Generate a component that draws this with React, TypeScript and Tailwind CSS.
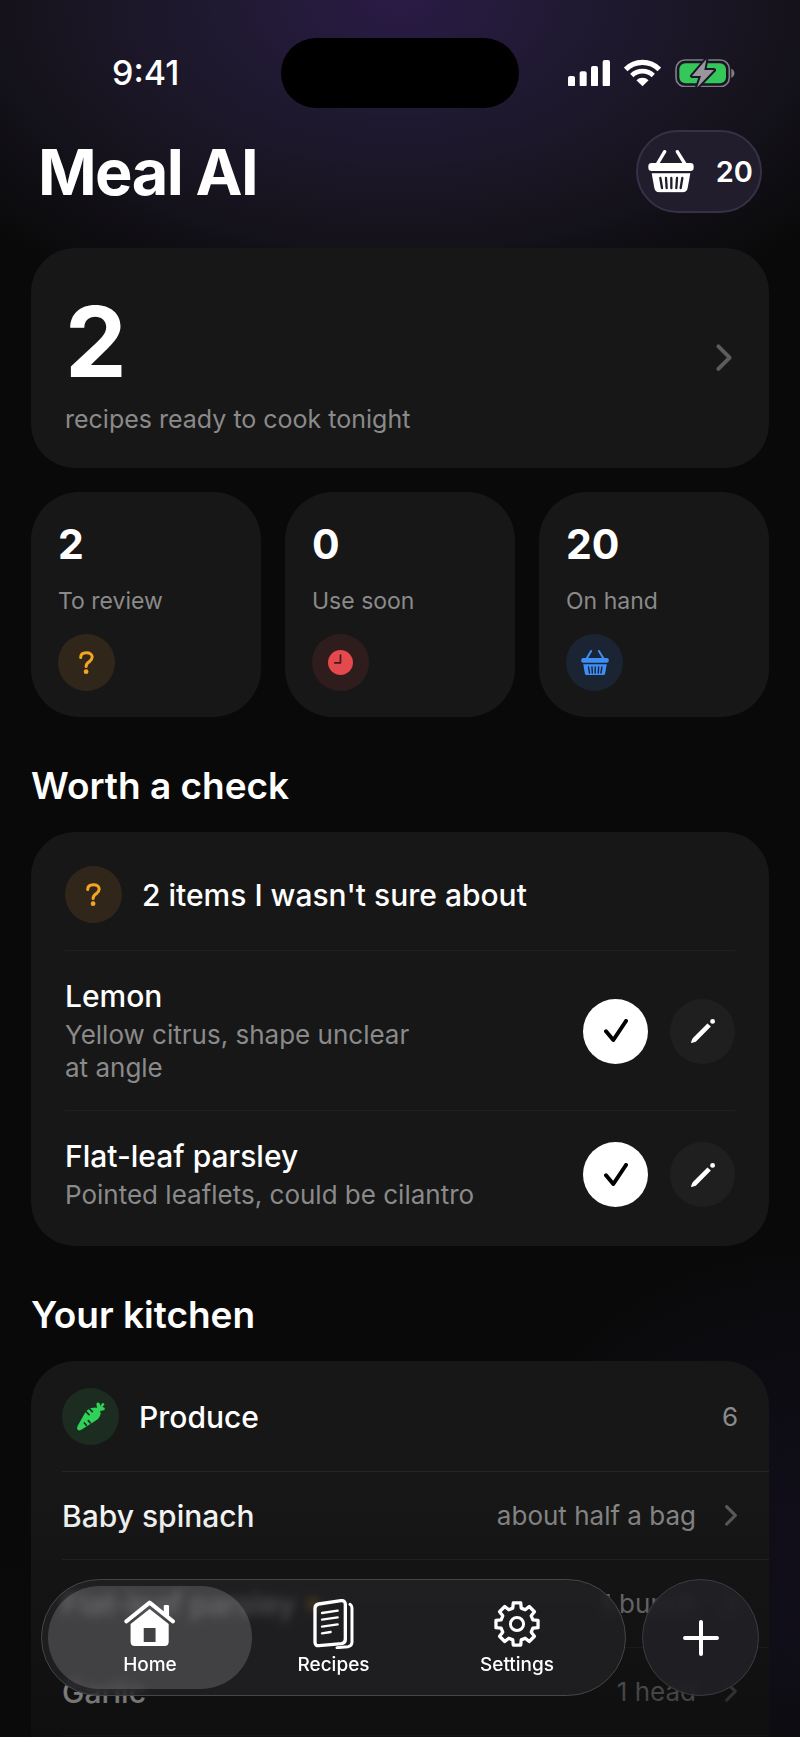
import { ReactNode } from 'react';
import clsx from 'clsx';

interface IconProps {
  className?: string;
}

function BasketIcon({ className }: IconProps) {
  return (
    <svg viewBox="0 0 138 128" className={className} aria-hidden="true">
      <mask id="basket-slots">
        <rect width="138" height="128" fill="white" />
        <path
          d="M37 84l5 30M54 84l2 30M70 84v30M87 84l-2 30M103 84l-5 30"
          stroke="black"
          strokeWidth="7"
          strokeLinecap="round"
        />
      </mask>
      <path d="M50 5L28 42M88 5l23 37" stroke="currentColor" strokeWidth="10" strokeLinecap="round" fill="none" />
      <rect x="1" y="39" width="136" height="24" rx="10" fill="currentColor" />
      <path
        d="M11 70H127L119 114Q116 127 104 127H34Q22 127 19 114Z"
        fill="currentColor"
        mask="url(#basket-slots)"
      />
    </svg>
  );
}

function QuestionIcon({ className }: IconProps) {
  return (
    <svg viewBox="0 0 44 68" className={className} fill="none" aria-hidden="true">
      <path
        d="M5 19C5 9 12 5 22 5S39 10 39 18C39 25 35 28 30 32C24 36 21 39 21 46"
        stroke="currentColor"
        strokeWidth="9"
        strokeLinecap="round"
      />
      <circle cx="21" cy="61" r="7" fill="currentColor" />
    </svg>
  );
}

function ClockIcon({ className }: IconProps) {
  return (
    <svg viewBox="0 0 74 74" className={className} fill="none" aria-hidden="true">
      <circle cx="37" cy="37" r="37" fill="currentColor" />
      <path d="M37 15V38H20" stroke="#3a1d1e" strokeWidth="5" strokeLinecap="round" strokeLinejoin="round" />
    </svg>
  );
}

function CarrotIcon({ className }: IconProps) {
  return (
    <svg viewBox="0 0 84 86" className={className} fill="none" aria-hidden="true">
      <path
        d="M1 82Q-1 77 3 70L25 31Q36 17 50 17Q60 16 66 23Q74 31 69 42Q65 52 53 58L13 83Q4 88 1 82Z"
        fill="currentColor"
      />
      <path
        d="M61 24L58 5Q62-1 68 4L70 12L76 3Q83 2 82 9L76 14L82 17Q86 22 80 25L66 28Z"
        fill="currentColor"
      />
      <path d="M27 29l9 9M38 21l8 8M28 70l-6-7M40 63l-6-7" stroke="#1c2c20" strokeWidth="5" strokeLinecap="round" />
    </svg>
  );
}

function CheckIcon({ className }: IconProps) {
  return (
    <svg viewBox="0 0 72 70" className={className} fill="none" aria-hidden="true">
      <path d="M6 37L28 63L66 6" stroke="currentColor" strokeWidth="12" strokeLinecap="round" strokeLinejoin="round" />
    </svg>
  );
}

function PencilIcon({ className }: IconProps) {
  return (
    <svg viewBox="0 0 70 70" className={className} fill="currentColor" aria-hidden="true">
      <path d="M1 70Q0 68 1 65L5 56L48 13L58 22L14 66L4 69Q2 71 1 70Z" />
      <circle cx="63" cy="7" r="7" />
    </svg>
  );
}

function ChevronIcon({ className }: IconProps) {
  return (
    <svg viewBox="0 0 16 26" className={className} fill="none" aria-hidden="true">
      <path d="M3 3L13 13L3 23" stroke="currentColor" strokeWidth="3.500" strokeLinecap="round" strokeLinejoin="round" />
    </svg>
  );
}

function HomeIcon({ className }: IconProps) {
  return (
    <svg viewBox="0 0 156 146" className={className} aria-hidden="true">
      <path d="M121 19Q121 15 125 15H133Q137 15 137 19V50L121 38Z" fill="currentColor" />
      <path
        d="M7 65L78 8L149 65"
        fill="none"
        stroke="currentColor"
        strokeWidth="12"
        strokeLinecap="round"
        strokeLinejoin="round"
      />
      <path
        fillRule="evenodd"
        d="M20 73L78 27L136 73V127Q136 140 123 140H33Q20 140 20 127ZM60 85V128H96V85Z"
        fill="currentColor"
      />
    </svg>
  );
}

function RecipesIcon({ className }: IconProps) {
  return (
    <svg
      viewBox="0 0 122 150"
      className={className}
      fill="none"
      stroke="currentColor"
      strokeLinecap="round"
      strokeLinejoin="round"
      aria-hidden="true"
    >
      <path d="M17 15L84 5Q97 4 97 16V121Q97 132 86 134L18 140Q6 141 6 129V28Q6 17 17 15Z" strokeWidth="10" />
      <path d="M27 42L74 35M27 62L74 55M27 83L74 76M27 103L53 99" strokeWidth="7" />
      <path d="M111 16Q117 20 117 27V130Q117 141 105 143L72 146" strokeWidth="9" />
    </svg>
  );
}

// Outline of an eight-toothed gear round (70, 70)
const GEAR_PATH =
  Array.from({ length: 8 }, (_, tooth) =>
    [
      [-15, 50],
      [-10, 65],
      [10, 65],
      [15, 50],
    ].map(([offset, radius]) => {
      const angle = ((tooth * 45 + offset) * Math.PI) / 180;
      return `${(70 + radius * Math.sin(angle)).toFixed(1)} ${(70 - radius * Math.cos(angle)).toFixed(1)}`;
    }),
  )
    .flat()
    .map((point, i) => `${i === 0 ? 'M' : 'L'}${point}`)
    .join('') + 'Z';

function GearIcon({ className }: IconProps) {
  return (
    <svg
      viewBox="0 0 140 140"
      className={className}
      fill="none"
      stroke="currentColor"
      strokeLinejoin="round"
      aria-hidden="true"
    >
      <path d={GEAR_PATH} strokeWidth="10" />
      <circle cx="70" cy="70" r="20" strokeWidth="9" />
    </svg>
  );
}

function PlusIcon({ className }: IconProps) {
  return (
    <svg viewBox="0 0 108 108" className={className} aria-hidden="true">
      <path d="M54 6V102M6 54H102" stroke="currentColor" strokeWidth="12" strokeLinecap="round" />
    </svg>
  );
}

function StatusIcons() {
  return (
    <div className="flex items-center gap-[14px]">
      <svg viewBox="0 0 126 80" className="w-[42px]" fill="white" aria-label="Signal">
        <rect x="0" y="48" width="21" height="32" rx="6" />
        <rect x="35" y="34" width="21" height="46" rx="6" />
        <rect x="69" y="18" width="21" height="62" rx="6" />
        <rect x="104" y="0" width="22" height="80" rx="6" />
      </svg>
      <svg viewBox="0 0 110 82" className="w-[37px]" fill="none" stroke="white" aria-label="Wi-Fi">
        <path d="M5 31A70 70 0 0 1 105 31" strokeWidth="15" />
        <path d="M23 49A46 46 0 0 1 87 49" strokeWidth="14" />
        <path d="M55 81L37 63A26 26 0 0 1 73 63Z" fill="white" stroke="none" />
      </svg>
      <svg viewBox="0 0 180 86" className="w-[60px]" fill="none" aria-label="Battery charging">
        <rect x="3" y="3" width="160" height="80" rx="27" stroke="#817d87" strokeWidth="5" />
        <rect x="13" y="13" width="140" height="60" rx="18" fill="#34c759" />
        <path d="M169 29Q178 33 178 43T169 57Z" fill="#817d87" />
        <path
          d="M94 1L51 51H78L66 86L117 33H88Z"
          fill="#9a969e"
          stroke="#1b1628"
          strokeWidth="12"
          strokeLinejoin="round"
          paintOrder="stroke"
        />
      </svg>
    </div>
  );
}

interface BadgeProps {
  className: string;
  children: ReactNode;
}

function Badge({ className, children }: BadgeProps) {
  return (
    <span className={clsx('flex size-[57px] shrink-0 items-center justify-center rounded-full', className)}>
      {children}
    </span>
  );
}

const stats = [
  {
    value: 2,
    label: 'To review',
    badge: 'bg-[#30271a] text-[#f5a524]',
    icon: <QuestionIcon className="h-[23px]" />,
  },
  {
    value: 0,
    label: 'Use soon',
    badge: 'bg-[#2f1d1e] text-[#e5484d]',
    icon: <ClockIcon className="size-[25px]" />,
  },
  {
    value: 20,
    label: 'On hand',
    badge: 'bg-[#1b2432] text-[#3e8ef7]',
    icon: <BasketIcon className="w-7" />,
  },
];

const unsureItems = [
  { name: 'Lemon', reason: 'Yellow citrus, shape unclear\nat angle' },
  { name: 'Flat-leaf parsley', reason: 'Pointed leaflets, could be cilantro' },
];

const produce = [
  { name: 'Baby spinach', amount: 'about half a bag', flagged: false },
  { name: 'Flat-leaf parsley', amount: '1 bunch', flagged: true },
  { name: 'Garlic', amount: '1 head', flagged: false },
];

const tabs = [
  { name: 'Home', icon: <HomeIcon className="h-12" />, active: true },
  { name: 'Recipes', icon: <RecipesIcon className="h-[50px]" />, active: false },
  { name: 'Settings', icon: <GearIcon className="h-[46px]" />, active: false },
];

export default function App() {
  return (
    <div className="relative h-screen overflow-hidden bg-[#090909] bg-[radial-gradient(ellipse_70%_340px_at_50%_0%,#2a1b45_0%,#1f1930_35%,#17141f_65%,#090909_100%),radial-gradient(ellipse_360px_420px_at_100%_95%,#141021_0%,#09090900_100%)] bg-blend-lighten font-[Inter,sans-serif] text-white">
      {/* Status bar */}
      <div className="grid grid-cols-3 items-center px-[31px] pt-[38px]">
        <span className="pl-[81px] text-[34px] leading-10 font-medium">9:41</span>
        <span className="h-[70px] w-[238px] justify-self-center rounded-full bg-black" />
        <span className="justify-self-end pr-[34px]">
          <StatusIcons />
        </span>
      </div>

      <header className="mt-[22px] flex items-center justify-between px-[38px]">
        <h1 className="text-[63px] leading-[80px] font-bold tracking-tight">Meal AI</h1>
        <button
          type="button"
          aria-label="20 items in basket"
          className="flex h-[83px] items-center gap-[22px] rounded-full border-2 border-[#373148] bg-[#221d2c] pr-[7px] pl-[10px]"
        >
          <BasketIcon className="w-[46px]" />
          <span className="text-[29px] leading-9 font-semibold">20</span>
        </button>
      </header>

      <main className="mt-[35px] px-[31px]">
        <a
          href="#recipes"
          className="flex items-center justify-between rounded-[44px] bg-[#171717] py-[33px] pr-[36px] pl-[34px]"
        >
          <span>
            <span className="block pt-3 text-[98px] leading-[98px] font-bold">2</span>
            <span className="mt-3 block text-[25px] leading-8 text-[#8a8a8a]">recipes ready to cook tonight</span>
          </span>
          <ChevronIcon className="w-[18px] text-[#5c5c5c]" />
        </a>

        <div className="mt-6 grid grid-cols-3 gap-6">
          {stats.map((stat) => (
            <button
              key={stat.label}
              type="button"
              className="rounded-[48px] bg-[#171717] px-[27px] pt-7 pb-[26px] text-left"
            >
              <span className="block text-[41px] leading-[48px] font-bold">{stat.value}</span>
              <span className="mt-[19px] mb-[19px] block text-[23px] leading-7 text-[#8a8a8a]">{stat.label}</span>
              <Badge className={stat.badge}>{stat.icon}</Badge>
            </button>
          ))}
        </div>

        <h2 className="mt-[47px] text-[37px] leading-[44px] font-semibold">Worth a check</h2>
        <section className="mt-6 rounded-[44px] bg-[#171717] px-[34px]">
          <div className="flex items-center gap-5 pt-[34px] pb-[27px]">
            <Badge className="bg-[#30271a] text-[#f5a524]">
              <QuestionIcon className="h-[23px]" />
            </Badge>
            <h3 className="text-[30px] leading-9 font-medium">2 items I wasn't sure about</h3>
          </div>
          {unsureItems.map((item) => (
            <div
              key={item.name}
              className="flex items-center gap-[22px] border-t border-[#1f1f1f] pt-[27px] pb-[26px] last:pb-[35px]"
            >
              <div className="flex-1">
                <h4 className="text-[30px] leading-9 font-medium">{item.name}</h4>
                <p className="mt-1 text-[26px] leading-[33px] whitespace-pre-line text-[#8a8a8a]">{item.reason}</p>
              </div>
              <button
                type="button"
                aria-label={`Confirm ${item.name}`}
                className="flex size-[65px] items-center justify-center rounded-full bg-white text-black"
              >
                <CheckIcon className="w-6" />
              </button>
              <button
                type="button"
                aria-label={`Edit ${item.name}`}
                className="flex size-[65px] items-center justify-center rounded-full bg-[#1f1f1f] text-white"
              >
                <PencilIcon className="w-6" />
              </button>
            </div>
          ))}
        </section>

        <h2 className="mt-[47px] text-[37px] leading-[44px] font-semibold">Your kitchen</h2>
        <section className="mt-6 rounded-t-[44px] bg-[#171717] pl-[31px]">
          <div className="flex items-center gap-5 pt-[27px] pr-[31px] pb-[26px]">
            <Badge className="bg-[#1c2c20] text-[#30d158]">
              <CarrotIcon className="w-7" />
            </Badge>
            <h3 className="flex-1 text-[30px] leading-9 font-medium">Produce</h3>
            <span className="text-[26px] leading-9 text-[#8a8a8a]">6</span>
          </div>
          <ul>
            {produce.map((item) => (
              <li key={item.name} className="border-b border-[#262626] first:border-t">
                <a href="#item" className="flex h-[87px] items-center pr-[31px]">
                  <span className="text-[30px] leading-9 font-medium">{item.name}</span>
                  {item.flagged && <span className="ml-3 size-3 rounded-full bg-[#ff9f0a]" />}
                  <span className="ml-auto text-[26px] leading-9 text-[#8a8a8a]">{item.amount}</span>
                  <ChevronIcon className="ml-7 w-[14px] text-[#5c5c5c]" />
                </a>
              </li>
            ))}
            <li className="h-20" />
          </ul>
        </section>
      </main>

      {/* Content fades out under the floating tab bar */}
      <div className="pointer-events-none absolute inset-x-0 bottom-0 h-60 bg-linear-to-b from-[#0b0b0c00] via-[#0b0b0c59] to-[#0b0b0ca6]" />

      <div className="absolute inset-x-[41px] bottom-[41px] flex items-center gap-4">
        <nav className="grid h-[117px] flex-1 grid-cols-[5fr_4fr_5fr] rounded-full border border-[#464648] bg-[#242426b3] p-[6px] backdrop-blur-[5px]">
          {tabs.map((tab) => (
            <a
              key={tab.name}
              href={`#${tab.name.toLowerCase()}`}
              className={clsx(
                'flex flex-col items-center justify-end rounded-full pb-3',
                tab.active && 'bg-[#ffffff29]',
              )}
            >
              <span className="flex h-[50px] items-center">{tab.icon}</span>
              <span className="mt-1 text-[19px] leading-6 font-medium">{tab.name}</span>
            </a>
          ))}
        </nav>
        <button
          type="button"
          aria-label="Add item"
          className="flex size-[117px] items-center justify-center rounded-full border border-[#3d3d42] bg-[#222126d9] backdrop-blur-[5px]"
        >
          <PlusIcon className="w-9" />
        </button>
      </div>
    </div>
  );
}
